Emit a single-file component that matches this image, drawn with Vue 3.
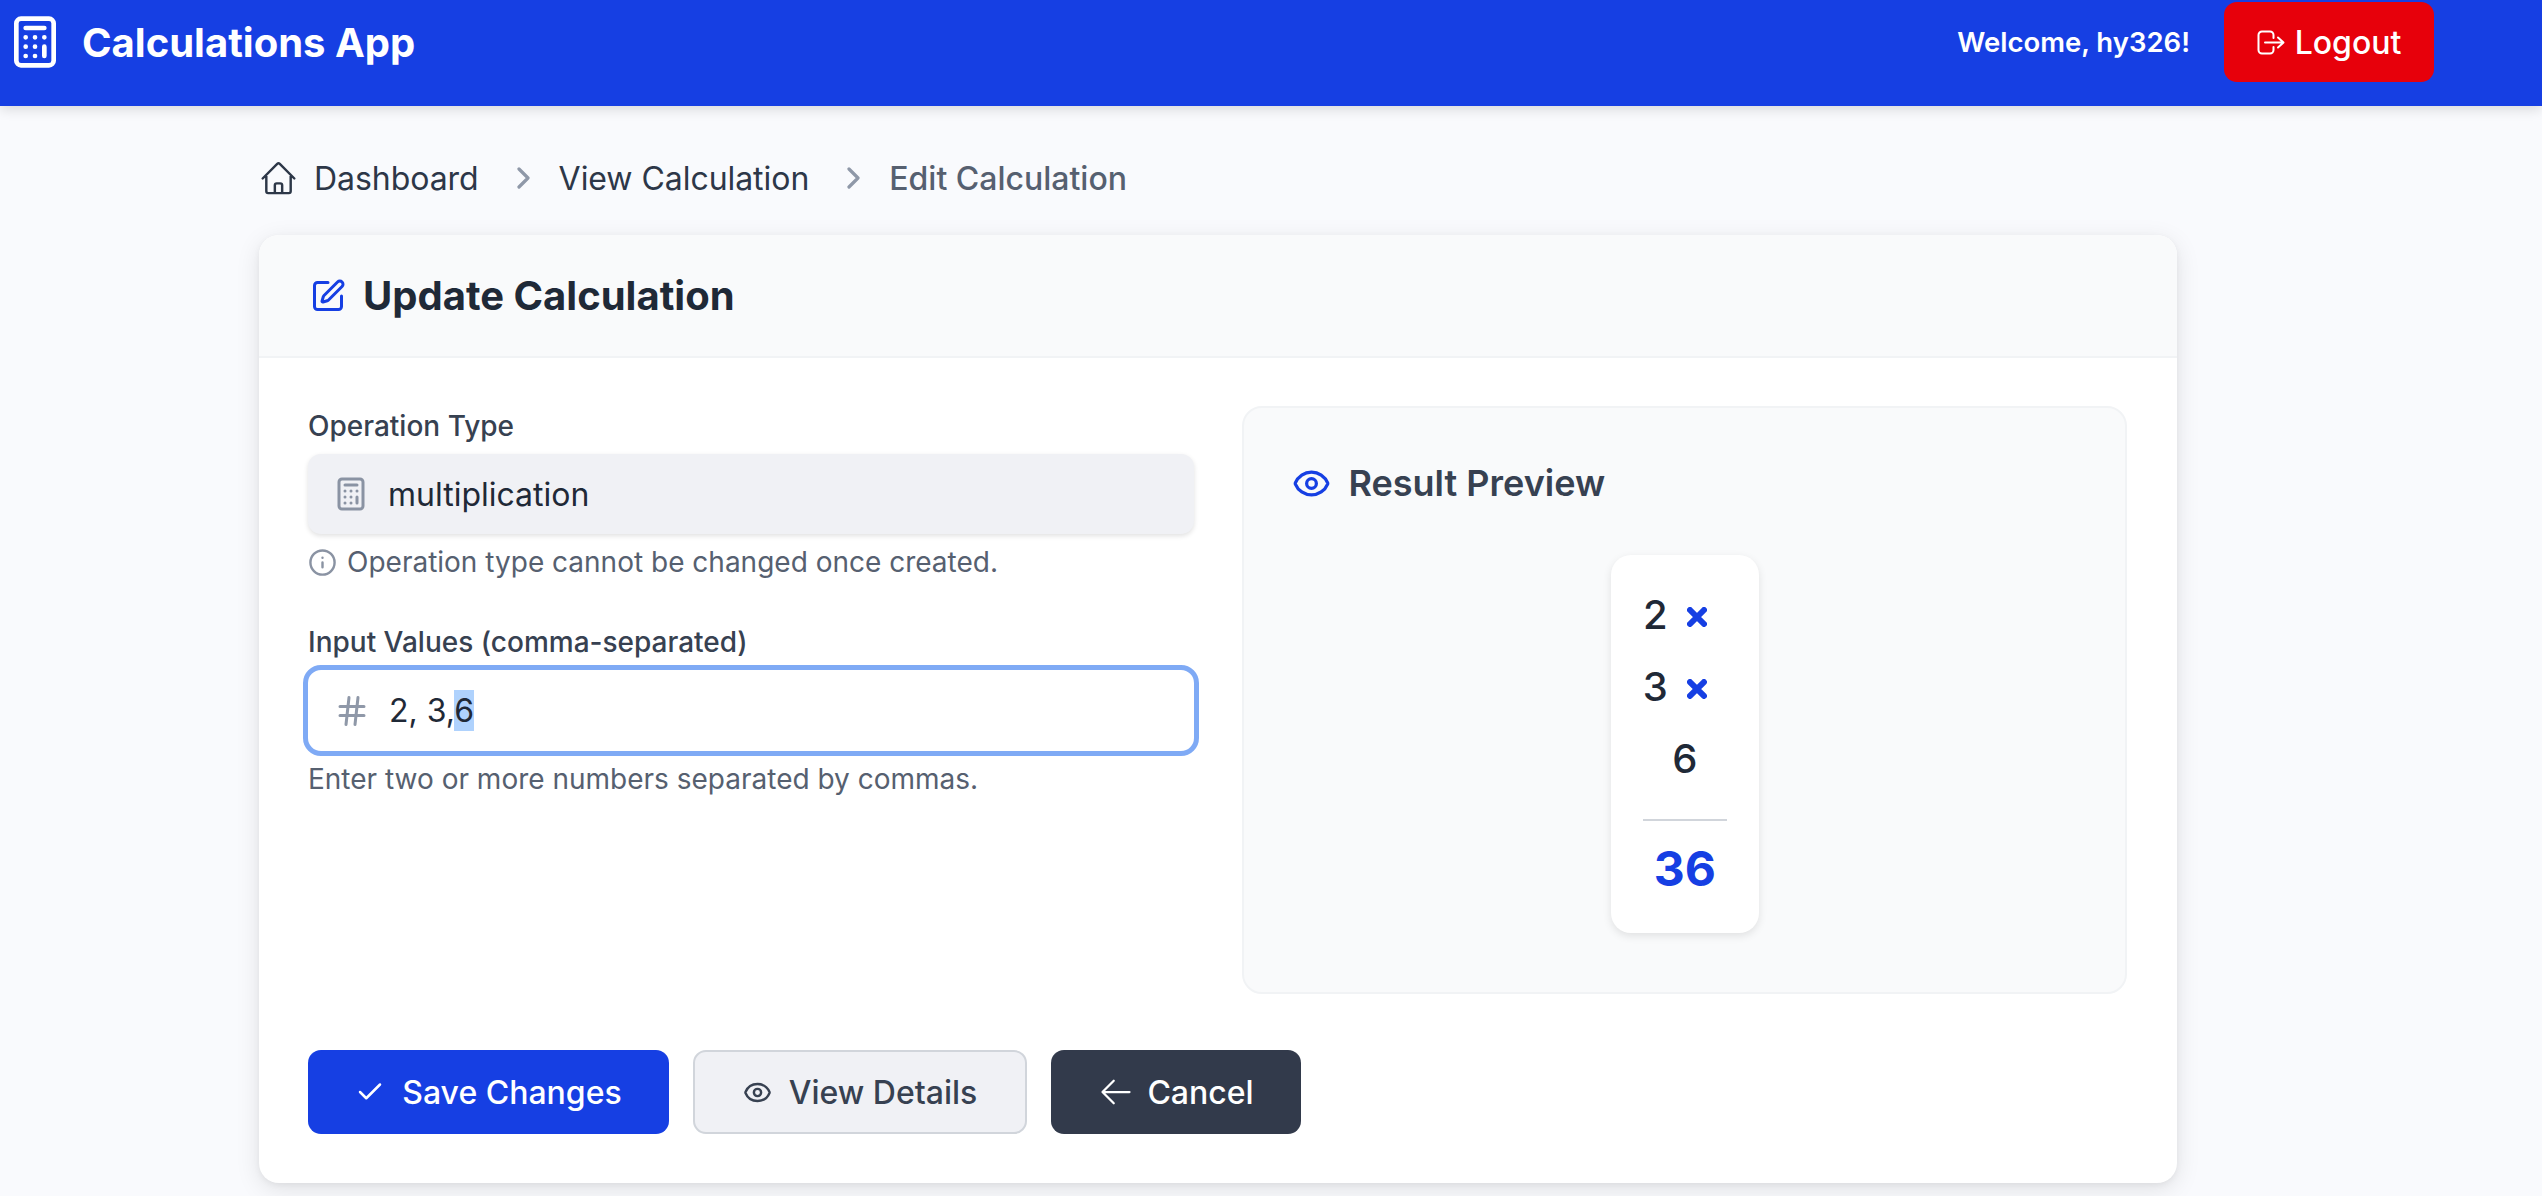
<script setup>
const rows = [
  { value: '2', op: true },
  { value: '3', op: true },
  { value: '6', op: false },
]
</script>

<template>
  <div class="page">
    <nav class="nav">
      <div class="brand">
        <svg class="brand-icon" viewBox="0 0 24 24" fill="none" stroke="currentColor" stroke-width="2" stroke-linecap="round" stroke-linejoin="round">
          <rect x="4" y="2" width="16" height="20" rx="2" />
          <path d="M8 6h8M16 14v4M16 10h.01M12 10h.01M8 10h.01M12 14h.01M8 14h.01M12 18h.01M8 18h.01" />
        </svg>
        <span class="brand-name">Calculations App</span>
      </div>
      <div class="user">
        <span class="welcome">Welcome, hy326!</span>
        <button class="logout">
          <svg class="logout-icon" viewBox="0 0 28 25" fill="none" stroke="currentColor" stroke-width="2" stroke-linecap="round" stroke-linejoin="round">
            <path d="M16.5 8V5A3.5 3.5 0 0 0 13 1.5H5A3.5 3.5 0 0 0 1.5 5v15A3.5 3.5 0 0 0 5 23.5h8a3.5 3.5 0 0 0 3.5-3.5v-3M8 12.5h18M21 7.5l5.5 5-5.5 5" />
          </svg>
          Logout
        </button>
      </div>
    </nav>

    <main class="main">
      <div class="crumbs">
        <svg class="home" viewBox="0 0 24 24" fill="none" stroke="currentColor" stroke-width="1.5" stroke-linecap="round" stroke-linejoin="round">
          <path d="M2.25 12l8.954-8.955c.44-.439 1.152-.439 1.591 0L21.75 12M4.5 9.75v10.125c0 .621.504 1.125 1.125 1.125H9.75v-4.875c0-.621.504-1.125 1.125-1.125h2.25c.621 0 1.125.504 1.125 1.125V21h4.125c.621 0 1.125-.504 1.125-1.125V9.75M8.25 21h8.25" />
        </svg>
        <span class="crumb">Dashboard</span>
        <svg class="chev" viewBox="0 0 14 24" fill="none" stroke="currentColor" stroke-width="3.2" stroke-linecap="round" stroke-linejoin="round"><path d="M2 3l9 9-9 9" /></svg>
        <span class="crumb">View Calculation</span>
        <svg class="chev" viewBox="0 0 14 24" fill="none" stroke="currentColor" stroke-width="3.2" stroke-linecap="round" stroke-linejoin="round"><path d="M2 3l9 9-9 9" /></svg>
        <span class="crumb current">Edit Calculation</span>
      </div>

      <section class="card">
        <header class="card-head">
          <svg class="edit-icon" viewBox="0 0 24 24" fill="none" stroke="currentColor" stroke-width="2" stroke-linecap="round" stroke-linejoin="round">
            <path d="M12 3H5a2 2 0 0 0-2 2v14a2 2 0 0 0 2 2h14a2 2 0 0 0 2-2v-7" />
            <path d="M18.375 2.625a1 1 0 0 1 3 3l-9.013 9.014a2 2 0 0 1-.853.505l-2.873.84a.5.5 0 0 1-.62-.62l.84-2.873a2 2 0 0 1 .506-.852z" />
          </svg>
          <h1 class="title">Update Calculation</h1>
        </header>

        <div class="card-body">
          <div class="columns">
            <div class="form">
              <label class="label">Operation Type</label>
              <div class="readonly">
                <svg class="field-icon" viewBox="0 0 24 24" fill="none" stroke="currentColor" stroke-width="2" stroke-linecap="round" stroke-linejoin="round">
                  <rect x="4" y="2" width="16" height="20" rx="2" />
                  <path d="M8 6h8M16 14v4M16 10h.01M12 10h.01M8 10h.01M12 14h.01M8 14h.01M12 18h.01M8 18h.01" />
                </svg>
                <span>multiplication</span>
              </div>
              <p class="hint first-hint">
                <svg class="info" viewBox="0 0 24 24" fill="none" stroke="currentColor" stroke-width="2" stroke-linecap="round" stroke-linejoin="round">
                  <circle cx="12" cy="12" r="10" />
                  <path d="M12 16v-4M12 8h.01" />
                </svg>
                Operation type cannot be changed once created.
              </p>

              <label class="label second-label">Input Values (comma-separated)</label>
              <div class="input">
                <svg class="hash" viewBox="0 0 24 24" fill="none" stroke="currentColor" stroke-width="2" stroke-linecap="round" stroke-linejoin="round">
                  <path d="M4 9h16M4 15h16M10 3L8 21M16 3l-2 18" />
                </svg>
                <span>2, 3,<span class="selected">6</span></span>
              </div>
              <p class="hint">Enter two or more numbers separated by commas.</p>
            </div>

            <aside class="preview">
              <div class="preview-head">
                <svg class="eye" viewBox="0 0 24 24" fill="none" stroke="currentColor" stroke-width="2" stroke-linecap="round" stroke-linejoin="round">
                  <path d="M2.062 12.348a1 1 0 0 1 0-.696 10.75 10.75 0 0 1 19.876 0 1 1 0 0 1 0 .696 10.75 10.75 0 0 1-19.876 0" />
                  <circle cx="12" cy="12" r="3" />
                </svg>
                <h2 class="preview-title">Result Preview</h2>
              </div>
              <div class="sum-wrap">
                <div class="sum">
                  <div v-for="row in rows" :key="row.value" class="sum-row">
                    <span>{{ row.value }}</span>
                    <svg v-if="row.op" class="times" viewBox="0 0 20 20" fill="none" stroke="currentColor" stroke-width="6" stroke-linecap="round"><path d="M3 3l14 14M17 3L3 17" /></svg>
                  </div>
                  <div class="rule"></div>
                  <div class="total">36</div>
                </div>
              </div>
            </aside>
          </div>

          <div class="actions">
            <button class="btn primary">
              <svg class="btn-icon check" viewBox="0 0 24 24" fill="none" stroke="currentColor" stroke-width="2" stroke-linecap="round" stroke-linejoin="round"><path d="M20 6L9 17l-5-5" /></svg>
              Save Changes
            </button>
            <button class="btn secondary">
              <svg class="btn-icon" viewBox="0 0 24 24" fill="none" stroke="currentColor" stroke-width="2" stroke-linecap="round" stroke-linejoin="round">
                <path d="M2.062 12.348a1 1 0 0 1 0-.696 10.75 10.75 0 0 1 19.876 0 1 1 0 0 1 0 .696 10.75 10.75 0 0 1-19.876 0" />
                <circle cx="12" cy="12" r="3" />
              </svg>
              View Details
            </button>
            <button class="btn dark">
              <svg class="btn-icon arrow" viewBox="0 0 24 24" fill="none" stroke="currentColor" stroke-width="1.5" stroke-linecap="round" stroke-linejoin="round"><path d="M10.5 19.5L3 12l7.5-7.5M3 12h18" /></svg>
              Cancel
            </button>
          </div>
        </div>
      </section>
    </main>
  </div>
</template>

<style>
html, body { margin: 0; background: #f9fafd; }
</style>

<style scoped>
.page {
  height: 1196px;
  overflow: hidden;
  background: #f9fafd;
  font-family: Inter, "Liberation Sans", sans-serif;
  color: #1f2937;
}
.nav {
  height: 106px;
  box-sizing: border-box;
  padding: 2px 108px 24px 7px;
  display: flex;
  justify-content: space-between;
  align-items: center;
  background: #163fe3;
  color: #fff;
  box-shadow: 0 3px 12px rgba(0, 0, 0, 0.14);
  position: relative;
}
.brand { display: flex; align-items: center; gap: 19px; }
.brand-icon { width: 56px; height: 56px; }
.brand-name { font-size: 40px; font-weight: 700; }
.user { display: flex; align-items: center; gap: 34px; }
.welcome { font-size: 27.5px; font-weight: 600; }
.logout {
  width: 210px;
  height: 80px;
  border: 0;
  border-radius: 13px;
  background: #e7000b;
  color: #fff;
  display: flex;
  align-items: center;
  justify-content: center;
  gap: 10px;
  font: 500 32px Inter, "Liberation Sans", sans-serif;
}
.logout-icon { width: 28px; height: 25px; }

.main { width: 1918px; margin-left: 259px; padding-top: 52px; }
.crumbs { display: flex; align-items: center; height: 40px; }
.home { width: 39px; height: 39px; margin-right: 16px; color: #2d3748; }
.crumb { font-size: 32px; color: #2d3748; letter-spacing: -0.05px; }
.current { color: #566070; font-weight: 500; letter-spacing: 0; }
.chev { width: 14px; height: 24px; margin: 0 28px 0 38px; color: #8f98a8; }

.card {
  margin-top: 37px;
  height: 948px;
  background: #fff;
  border-radius: 20px;
  overflow: hidden;
  box-shadow: 0 6px 24px rgba(0, 0, 0, 0.1), 0 2px 6px rgba(0, 0, 0, 0.05);
}
.card-head {
  height: 123px;
  box-sizing: border-box;
  padding-left: 51px;
  display: flex;
  align-items: center;
  gap: 17px;
  background: #f9fafb;
  border-bottom: 2px solid #f1f3f5;
}
.edit-icon { width: 36px; height: 36px; color: #163fe3; }
.title { margin: 0; font-size: 40px; font-weight: 700; color: #1f2937; }
.card-body { padding: 48px 50px 0 49px; }
.columns { display: flex; gap: 48px; height: 588px; }
.form { width: 887px; }
.label { display: block; font-size: 28px; line-height: 40px; font-weight: 500; color: #374151; }
.readonly {
  margin-top: 8px;
  height: 80px;
  display: flex;
  align-items: center;
  padding-left: 26px;
  gap: 19px;
  border-radius: 13px;
  background: #f0f1f5;
  box-shadow: 0 2px 5px rgba(0, 0, 0, 0.12);
  font-size: 32px;
  color: #1f2937;
}
.field-icon { width: 36px; height: 36px; color: #8a93a3; margin-left: -1px; }
.hint {
  margin: 8px 0 0;
  font-size: 28px;
  line-height: 40px;
  color: #566070;
  display: flex;
  align-items: center;
  gap: 10px;
}
.info { width: 29px; height: 29px; color: #8a93a3; }
.second-label { margin-top: 40px; }
.input {
  margin-top: 8px;
  height: 81px;
  box-sizing: border-box;
  display: flex;
  align-items: center;
  padding-left: 26px;
  gap: 19px;
  border-radius: 13px;
  background: #fff;
  outline: 5px solid #7faaf5;
  font-size: 32px;
  color: #1f2937;
}
.hash { width: 36px; height: 36px; color: #8f98a8; }
.selected { background: #afd2fd; padding: 1px 0; }

.preview {
  width: 885px;
  height: 588px;
  box-sizing: border-box;
  padding: 57px 48px 0;
  border: 2px solid #f1f3f5;
  border-radius: 20px;
  background: #f9fafb;
}
.preview-head { display: flex; align-items: center; gap: 17px; height: 36px; }
.eye { width: 39px; height: 39px; color: #163fe3; }
.preview-title { margin: 0; font-size: 36px; font-weight: 600; color: #374151; }
.sum-wrap { display: flex; justify-content: center; margin-top: 54px; }
.sum {
  width: 148px;
  height: 378px;
  box-sizing: border-box;
  padding: 23px 32px 0;
  background: #fff;
  border-radius: 20px;
  box-shadow: 0 3px 8px rgba(0, 0, 0, 0.1);
  font-size: 40px;
  font-weight: 500;
  color: #1f2937;
}
.sum-row {
  height: 72px;
  display: flex;
  align-items: center;
  justify-content: center;
  gap: 19px;
}
.times { width: 20px; height: 20px; color: #163fe3; margin: 6px 20px 0 0; }
.rule { height: 2px; background: #d1d5db; margin-top: 25px; }
.total { text-align: center; font-size: 48px; font-weight: 700; color: #163fe3; margin-top: 18px; }

.actions { display: flex; gap: 24px; margin-top: 56px; }
.btn {
  height: 84px;
  box-sizing: border-box;
  border-radius: 13px;
  display: flex;
  align-items: center;
  justify-content: center;
  gap: 13px;
  font: 500 32px Inter, "Liberation Sans", sans-serif;
  border: 0;
}
.btn-icon { width: 29px; height: 29px; }
.check { width: 30px; height: 30px; }
.arrow { width: 36px; height: 36px; }
.primary { width: 361px; background: #163fe3; color: #fff; gap: 17px; }
.secondary { width: 334px; background: #f0f1f5; color: #374151; border: 2px solid #d1d5db; gap: 17px; }
.dark { width: 250px; background: #323a4b; color: #fff; }
</style>
